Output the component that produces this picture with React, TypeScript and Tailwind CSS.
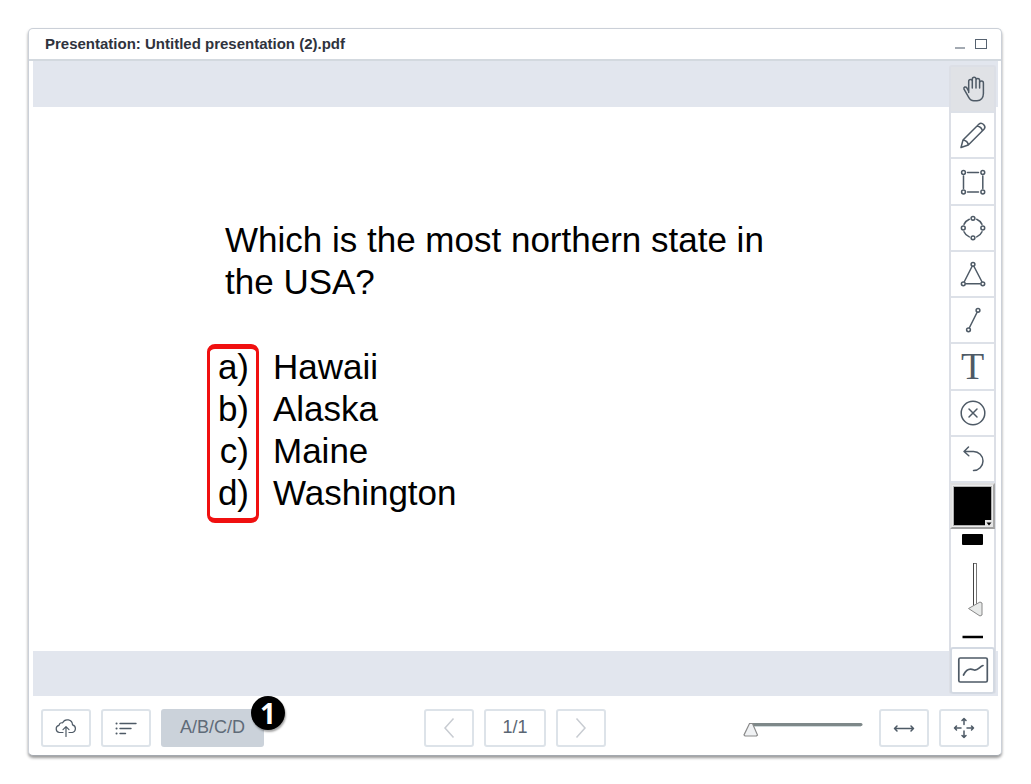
import React, { useState } from "react";

type IconProps = { children: React.ReactNode; size?: number };

function Icon({ children, size = 30 }: IconProps) {
  return (
    <svg
      width={size}
      height={size}
      viewBox={`0 0 ${size} ${size}`}
      fill="none"
      stroke="#4e5a66"
      strokeWidth="1.5"
      strokeLinecap="round"
      strokeLinejoin="round"
      aria-hidden="true"
    >
      {children}
    </svg>
  );
}

const tools: { name: string; icon: React.ReactNode }[] = [
  {
    name: "Pan",
    icon: (
      <Icon>
        <path d="M10.700 18.500V7.300a1.800 1.800 0 0 1 3.600 0V14M14.300 7.300V5a1.850 1.850 0 0 1 3.700 0v9M18 6.200a1.800 1.800 0 0 1 3.600 0V14M21.600 9a1.900 1.900 0 0 1 3.800 0v10.500c0 4.200-2.600 7.200-6.400 7.200h-3.200c-2.600 0-4-1.300-5.200-3.600L6 15.200c-.7-2.300 1.700-3.100 2.900-1.200l1.800 3.300" />
      </Icon>
    ),
  },
  {
    name: "Pencil",
    icon: (
      <Icon>
        <path d="M3 27.500l2-7.500L20.800 4.200c3-2.900 8 1.900 5.200 5L10.300 25zM5 20c2.800.4 5 2.400 5.300 5M19 6c2.800.4 5 2.400 5.300 5" />
      </Icon>
    ),
  },
  {
    name: "Rectangle",
    icon: (
      <Icon>
        <path d="M9.500 5.500h11M9.500 25h11M5.500 9v12.500M24.800 9v12.500" />
        <circle cx="5.500" cy="5.500" r="1.900" />
        <circle cx="24.800" cy="5.500" r="1.900" />
        <circle cx="5.500" cy="25" r="1.900" />
        <circle cx="24.800" cy="25" r="1.900" />
      </Icon>
    ),
  },
  {
    name: "Ellipse",
    icon: (
      <Icon>
        <path d="M18.700 6.200a9.800 9.800 0 0 1 5.300 5.200M24 18.700a9.800 9.800 0 0 1-5.300 5.200M11.300 23.900A9.800 9.800 0 0 1 6 18.700M6 11.400a9.800 9.800 0 0 1 5.300-5.200" />
        <circle cx="15" cy="5.300" r="1.900" />
        <circle cx="24.800" cy="15" r="1.900" />
        <circle cx="15" cy="24.800" r="1.900" />
        <circle cx="5.300" cy="15" r="1.900" />
      </Icon>
    ),
  },
  {
    name: "Triangle",
    icon: (
      <Icon>
        <path d="M14 7.500L6.400 22.500M16 7.500L23.800 22.500M8 24.800h14" />
        <circle cx="15" cy="5.300" r="1.900" />
        <circle cx="5.300" cy="24.800" r="1.900" />
        <circle cx="24.800" cy="24.800" r="1.900" />
      </Icon>
    ),
  },
  {
    name: "Line",
    icon: (
      <Icon>
        <path d="M19 7.500L11.500 22.500" />
        <circle cx="20" cy="5.300" r="1.900" />
        <circle cx="10.500" cy="24.800" r="1.900" />
      </Icon>
    ),
  },
  {
    name: "Text",
    icon: (
      <span className="font-['Liberation_Serif',serif] text-[38px] leading-[38px] text-[#4e5a66]">T</span>
    ),
  },
  {
    name: "Clear annotations",
    icon: (
      <Icon>
        <circle cx="15" cy="15" r="11.800" />
        <path d="M11 11l8 8M19 11l-8 8" />
      </Icon>
    ),
  },
  {
    name: "Undo",
    icon: (
      <Icon>
        <path d="M10.500 3L6 7.500l4.800 4.300M6 7.500h9.500a9.500 9.500 0 0 1 0 19" />
      </Icon>
    ),
  },
];

const answers = [
  ["a)", "Hawaii"],
  ["b)", "Alaska"],
  ["c)", "Maine"],
  ["d)", "Washington"],
];

const footerButton =
  "flex h-[38px] w-[50px] items-center justify-center rounded-[3px] border-2 border-[#dde3e9] bg-white";

export default function App() {
  const [tool, setTool] = useState("Pan");
  const [thickness, setThickness] = useState(1);
  const [zoom, setZoom] = useState(100);

  return (
    <div className="flex min-h-screen bg-white py-7 pr-[29px] pl-7 font-['Liberation_Sans',Arial,sans-serif]">
      <main className="flex flex-1 flex-col rounded-[5px] border border-[#cbd0d8] border-b-[#a4a9af] bg-white shadow-[0_2px_3px_rgba(0,0,0,0.4)]">
        <header className="flex h-8 items-center justify-between border-b-2 border-[#d3d9df] pr-3.5 pl-4">
          <h1 className="text-[15px] leading-5 font-bold text-[#2f333d]">
            Presentation: Untitled presentation (2).pdf
          </h1>
          <div className="flex gap-2.5">
            <button type="button" aria-label="Minimize" className="flex h-2.5 w-2.5 items-end">
              <span className="h-0.5 w-full bg-[#a3aab2]" />
            </button>
            <button type="button" aria-label="Maximize" className="h-2.5 w-3 border border-[#566270]" />
          </div>
        </header>

        <div className="mr-[3px] ml-1 grid flex-1">
          <section
            aria-label="Slide"
            className="col-start-1 row-start-1 flex flex-col border-t-[46px] border-b-[45px] border-[#e2e6ee] pt-28 pl-48 text-[35px] leading-[42px] text-black"
          >
            <p className="max-w-[560px]">Which is the most northern state in the USA?</p>
            <ol className="relative mt-[43px] w-fit">
              {answers.map(([letter, state]) => (
                <li key={letter} className="flex gap-6">
                  <span className="flex w-6 justify-end whitespace-nowrap">{letter}</span>
                  <span>{state}</span>
                </li>
              ))}
              <span className="pointer-events-none absolute -top-0.5 -bottom-[9px] -left-[18px] w-[52px] rounded-[8px] border-x-[3px] border-y-[5px] border-[#f01010]" />
            </ol>
          </section>

          <aside
            aria-label="Whiteboard tools"
            className="z-10 col-start-1 row-start-1 mt-1 mr-0.5 mb-0.5 flex w-[47px] flex-col justify-self-end rounded-[3px] border-x-2 border-t-2 border-[#dcdfe6] bg-white"
          >
            {tools.map(({ name, icon }) => (
              <button
                key={name}
                type="button"
                aria-label={name}
                aria-pressed={tool === name}
                onClick={() => setTool(name)}
                className="flex flex-1 basis-0 items-center justify-center border-b-2 border-[#dde1e8] bg-white aria-pressed:bg-[#e0e2e6]"
              >
                {icon}
              </button>
            ))}
            <button
              type="button"
              aria-label="Color"
              className="relative -mx-px h-[46px] border-2 border-t-[#dedede] border-r-[#a8a8a8] border-b-[#a0a0a0] border-l-[#e2e2e2] bg-[#ececec] p-px"
            >
              <span className="block h-full border border-[#b0b0b0] bg-black" />
              <svg className="absolute right-0 bottom-0" width="8" height="7" viewBox="0 0 8 7" aria-hidden="true">
                <path d="M0 0h8v7H0z" fill="#e6e6e6" />
                <path d="M1.500 2.500h5L4 5.500z" fill="#000" />
              </svg>
            </button>
            <div className="relative flex h-[118px] justify-center">
              <svg width="31" height="118" viewBox="0 0 31 118" aria-hidden="true">
                <rect x="5" y="5" width="21" height="11" rx="1" fill="#000" />
                <rect x="16.500" y="34.500" width="3" height="46" fill="#fff" stroke="#777" />
                <path d="M16.500 34v46" stroke="#444" />
                <path d="M11.500 79.500L23 73l2 1v12l-2 1z" fill="#e8eae9" stroke="#888" />
                <path d="M5.500 108h20.500" stroke="#000" strokeWidth="2.500" />
              </svg>
              <input
                type="range"
                aria-label="Thickness"
                min={1}
                max={30}
                value={thickness}
                onChange={(e) => setThickness(Number(e.target.value))}
                className="absolute inset-x-2 inset-y-6 opacity-0 [direction:rtl] [writing-mode:vertical-lr]"
              />
            </div>
            <button
              type="button"
              aria-label="Multi-user whiteboard"
              className="-mx-px flex h-[47px] items-center justify-center rounded-[3px] border-2 border-[#d3d9e2] bg-white"
            >
              <Icon size={32}>
                <rect x="1.800" y="4" width="28.500" height="24" rx="1.500" strokeWidth="1.700" />
                <path d="M6.500 21c3-6 6-7 10-5.200 4 1.700 6-3.300 9.500-4.300" strokeWidth="1.700" />
              </Icon>
            </button>
          </aside>
        </div>

        <footer className="grid grid-cols-[1fr_auto_1fr] items-start px-3 pt-[13px] pb-2 text-lg leading-6 text-[#5a6673]">
          <div className="flex gap-2.5">
            <button type="button" aria-label="Upload" className={footerButton}>
              <Icon size={24}>
                <path
                  d="M9 16.500H5.500a3.600 3.600 0 0 1-.5-7.100 3.200 3.200 0 0 1 3.600-2.600 5.200 5.200 0 0 1 9.900 2.100 3.900 3.900 0 0 1-.2 7.600H15M12 20.500V11M9 13.700l3-3 3 3"
                  strokeWidth="1.200"
                />
              </Icon>
            </button>
            <button type="button" aria-label="Poll" className={footerButton}>
              <Icon size={24}>
                <path d="M6 7.500h16M6 12.500h11M6 17.500h5.500" strokeWidth="1.400" />
                <path d="M2.500 7.500h.1M2.500 12.500h.1M2.500 17.500h.1" strokeWidth="2" />
              </Icon>
            </button>
            <div className="relative">
              <button
                type="button"
                className="h-[38px] w-[103px] rounded-[3px] bg-[#cbd2da] pb-0.5 text-[#5f6b78]"
              >
                A/B/C/D
              </button>
              <span className="absolute -top-[13px] -right-[21px] flex size-[34px] items-center justify-center rounded-full bg-black font-['Noto_Sans',sans-serif] text-[28px] leading-8 font-bold text-white shadow-[1px_2px_2px_rgba(0,0,0,0.35)]">
                1
              </span>
            </div>
          </div>

          <div className="flex gap-2.5">
            <button type="button" aria-label="Previous slide" className={footerButton}>
              <svg width="24" height="24" viewBox="0 0 24 24" fill="none" stroke="#c8ccd2" strokeWidth="1.500" aria-hidden="true">
                <path d="M16.500 2.500L8 12l8.500 9.500" />
              </svg>
            </button>
            <button type="button" className="h-[38px] w-[62px] rounded-[3px] border-2 border-[#dde3e9] bg-white pb-0.5">
              1/1
            </button>
            <button type="button" aria-label="Next slide" className={footerButton}>
              <svg width="24" height="24" viewBox="0 0 24 24" fill="none" stroke="#c8ccd2" strokeWidth="1.500" aria-hidden="true">
                <path d="M7.500 2.500L16 12l-8.500 9.500" />
              </svg>
            </button>
          </div>

          <div className="flex justify-end gap-2.5">
            <div className="relative mr-1.5 h-[38px] w-[120px]">
              <svg width="120" height="38" viewBox="0 0 120 38" aria-hidden="true">
                <path d="M9 15.500h109" stroke="#7e8889" strokeWidth="3" strokeLinecap="round" />
                <path d="M10 17.500h108" stroke="#cfd8da" />
                <path d="M6.500 14.500h3l5 11.500-1 1H2l-1-1z" fill="#f0f2f4" stroke="#8a8a8a" strokeWidth="1.200" />
              </svg>
              <input
                type="range"
                aria-label="Zoom"
                min={100}
                max={400}
                value={zoom}
                onChange={(e) => setZoom(Number(e.target.value))}
                className="absolute inset-0 w-full opacity-0"
              />
            </div>
            <button type="button" aria-label="Fit to width" className={footerButton}>
              <Icon size={24}>
                <path d="M2.500 12.500h19M5 10l-2.500 2.500L5 15M19 10l2.500 2.500L19 15" />
              </Icon>
            </button>
            <button type="button" aria-label="Fit to page" className={footerButton}>
              <Icon size={24}>
                <path d="M12 8.500v-6M10 4.500l2-2 2 2M12 15v6.500M10 19.500l2 2 2-2M9 12H2.500M4.500 10l-2 2 2 2M15 12h6.500M19.500 10l2 2-2 2" />
              </Icon>
            </button>
          </div>
        </footer>
      </main>
    </div>
  );
}
